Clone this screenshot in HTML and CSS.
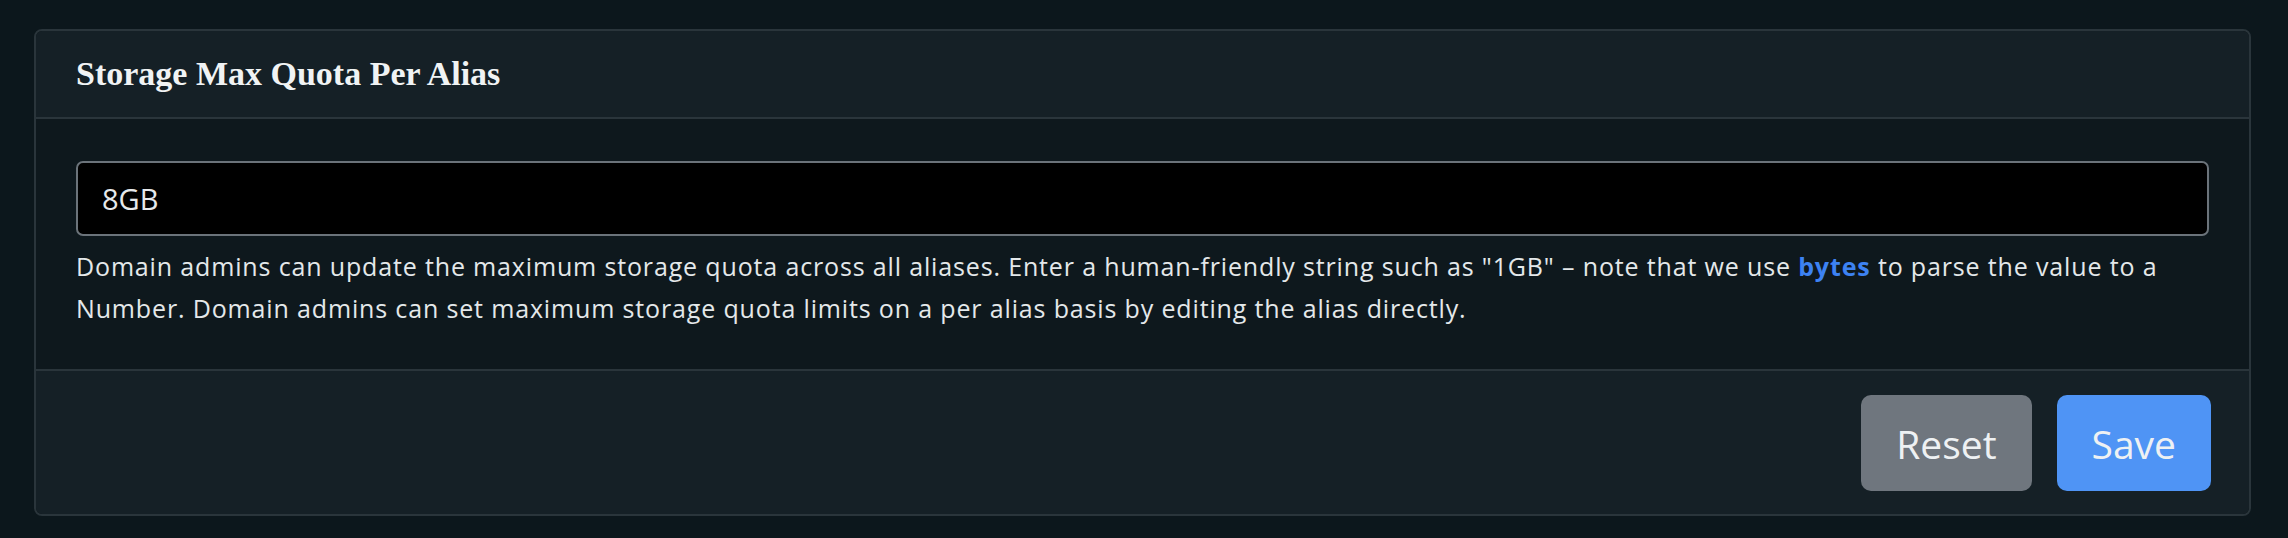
FILE: index.html
```html
<!DOCTYPE html>
<html lang="en">
<head>
    <meta charset="UTF-8">
    <meta name="viewport" content="width=device-width, initial-scale=1.0">
    <title>Storage Max Quota Per Alias</title>
    <link rel="stylesheet" href="styles.css">
</head>
<body>
    <div class="page">
        <form class="card" id="quotaForm">
            <div class="card-header">
                <h2>Storage Max Quota Per Alias</h2>
            </div>
            <div class="card-body">
                <input type="text" class="quota-input" value="8GB">
                <p class="help">Domain admins can update the maximum storage quota across all aliases. Enter a human-friendly string such as "1GB" &ndash; note that we use <a href="#">bytes</a> to parse the value to a Number. Domain admins can set maximum storage quota limits on a per alias basis by editing the alias directly.</p>
            </div>
            <div class="card-footer">
                <button type="reset" class="btn btn-reset">Reset</button>
                <button type="submit" class="btn btn-save">Save</button>
            </div>
        </form>
    </div>
</body>
</html>
```

FILE: styles.css
```css
body { margin: 0; background: #0c171c; font-family: "Open Sans", "Noto Sans", sans-serif; color: #e4e8ea; }
.page { padding: 29px 37px 23px 34px; }
.card { display: block; border: 2px solid #2a353b; border-radius: 8px; background: #0e181d; overflow: hidden; }
.card-header { background: #152026; border-bottom: 2px solid #2a353b; padding: 24px 40px; }
.card-header h2 { margin: 0; font-family: "Liberation Serif", serif; font-weight: bold; font-size: 34px; line-height: 38px; color: #f0f3f4; }
.card-body { padding: 42px 40px 40px; }
.quota-input { display: block; box-sizing: border-box; width: 100%; height: 75px; background: #000; border: 2px solid #6b737a; border-radius: 7px; padding: 0 24px; font-family: "Open Sans", sans-serif; font-size: 29px; color: #e6e9eb; outline: none; }
.help { margin: 9px 0 0; font-size: 25px; letter-spacing: 0.85px; line-height: 42px; color: #e4e8ea; }
.help a { color: #3d82f2; font-weight: bold; text-decoration: none; }
.card-footer { background: #152026; border-top: 2px solid #2a353b; padding: 24px 38px 23px; display: flex; justify-content: flex-end; gap: 25px; }
.btn { height: 96px; padding: 0 35px; border: 0; border-radius: 10px; font-family: "Open Sans", sans-serif; font-size: 39px; color: #eef1f3; }
.btn-reset { background: #6f767e; }
.btn-save { background: #4f94f5; }
```
